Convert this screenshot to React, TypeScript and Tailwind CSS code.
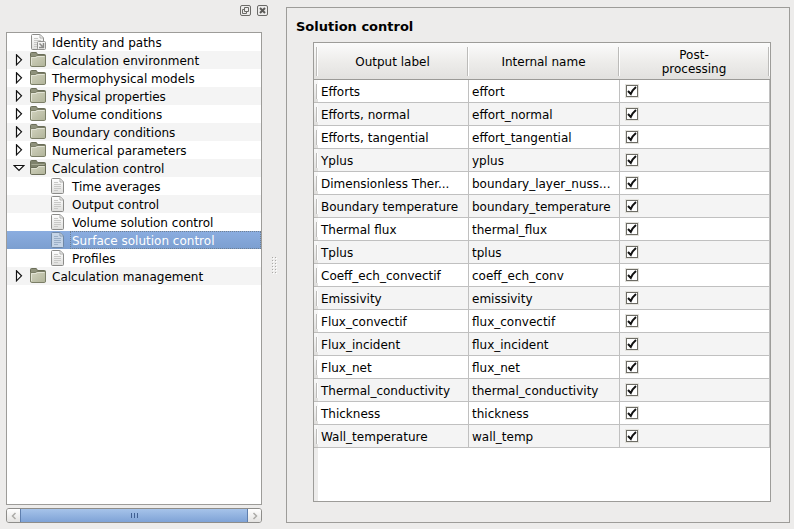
import React from "react";

type TreeItem = {
  label: string;
  kind: "page" | "link" | "folder" | "open";
  child?: boolean;
  selected?: boolean;
};

const treeItems: TreeItem[] = [
  { label: "Identity and paths", kind: "link" },
  { label: "Calculation environment", kind: "folder" },
  { label: "Thermophysical models", kind: "folder" },
  { label: "Physical properties", kind: "folder" },
  { label: "Volume conditions", kind: "folder" },
  { label: "Boundary conditions", kind: "folder" },
  { label: "Numerical parameters", kind: "folder" },
  { label: "Calculation control", kind: "open" },
  { label: "Time averages", kind: "page", child: true },
  { label: "Output control", kind: "page", child: true },
  { label: "Volume solution control", kind: "page", child: true },
  { label: "Surface solution control", kind: "page", child: true, selected: true },
  { label: "Profiles", kind: "page", child: true },
  { label: "Calculation management", kind: "folder" },
];

const rows: [string, string][] = [
  ["Efforts", "effort"],
  ["Efforts, normal", "effort_normal"],
  ["Efforts, tangential", "effort_tangential"],
  ["Yplus", "yplus"],
  ["Dimensionless Ther...", "boundary_layer_nuss..."],
  ["Boundary temperature", "boundary_temperature"],
  ["Thermal flux", "thermal_flux"],
  ["Tplus", "tplus"],
  ["Coeff_ech_convectif", "coeff_ech_conv"],
  ["Emissivity", "emissivity"],
  ["Flux_convectif", "flux_convectif"],
  ["Flux_incident", "flux_incident"],
  ["Flux_net", "flux_net"],
  ["Thermal_conductivity", "thermal_conductivity"],
  ["Thickness", "thickness"],
  ["Wall_temperature", "wall_temp"],
];

function Gradients() {
  return (
    <svg width="0" height="0" className="absolute" aria-hidden="true">
      <defs>
        <linearGradient id="folderFill" x1="0" y1="0" x2="1" y2="1">
          <stop offset="0" stopColor="#d3d4c0" />
          <stop offset="1" stopColor="#b0b399" />
        </linearGradient>
        <linearGradient id="pageFill" x1="0" y1="0" x2="0" y2="1">
          <stop offset="0" stopColor="#ffffff" />
          <stop offset="1" stopColor="#dededc" />
        </linearGradient>
      </defs>
    </svg>
  );
}

function FolderIcon({ open }: { open?: boolean }) {
  return (
    <svg width="16" height="16" viewBox="0 0 16 16" aria-hidden="true" className="shrink-0">
      <path d="M0.5 3V1.500q0-1 1-1h4.500q.7 0 1 1l.4 1H14.500q1 0 1 1V8H.5z" fill={open ? "#7e826c" : "#8f927c"} stroke="#6b6e59" />
      {open ? (
        <>
          <path d="M1.500 4.500h13" stroke="#a5a892" />
          <path d="M.5 7.500h6l2-2h7v7.500q0 1.500-1 1.500H1.500q-1 0-1-1.500z" fill="url(#folderFill)" stroke="#6b6e59" />
          <path d="M1.500 8.500H7l2-2h5.500" stroke="#e0e1d2" fill="none" />
        </>
      ) : (
        <>
          <path d="M.5 4.500h5l1.500-1h8.500v9.500q0 1.500-1 1.500H1.500q-1 0-1-1.500z" fill="url(#folderFill)" stroke="#7b7e67" />
          <path d="M1.500 13V5.500H6l1.500-1h7" stroke="#e2e3d5" fill="none" />
        </>
      )}
    </svg>
  );
}

function PageIcon({ link, selected }: { link?: boolean; selected?: boolean }) {
  return (
    <svg width="16" height="16" viewBox={link ? "-1 0 16 16" : "0 0 16 16"} aria-hidden="true" className="shrink-0">
      <path d="M1.500.5H9L12.500 4v10.500q0 1-1 1h-10q-1 0-1-1v-13q0-1 1-1z" fill={selected ? "#c5d4e6" : "url(#pageFill)"} stroke={selected ? "#7088a6" : "#8b8b89"} />
      <path d="M9 .5V4h3.500z" fill={selected ? "#dce5f0" : "#ffffff"} stroke={selected ? "#8499b2" : "#adadab"} />
      <path d="M3 4.500h4M3 6.500h7M3 8.500h7M3 10.500h7M3 12.500h4" stroke={selected ? "#9bafc7" : "#c8c8c6"} />
      {link && (
        <>
          <rect x="6.500" y="7.500" width="8" height="8" rx="1" fill="#f3f3f2" stroke="#929290" />
          <path d="M8.500 9.500l3 3M12.500 9v4.500h-4.500" stroke="#8a8a88" strokeWidth="1.500" fill="none" />
        </>
      )}
    </svg>
  );
}

function Expander({ open }: { open?: boolean }) {
  return (
    <svg width="12" height="12" viewBox="0 0 12 12" aria-hidden="true" className="shrink-0">
      <path d={open ? "M1 3.500h10L6 8.500z" : "M3.500 .8v10L8.500 5.800z"} fill="#fff" stroke="#111" strokeWidth="1.200" />
    </svg>
  );
}

function TreeRow({ item }: { item: TreeItem }) {
  const isFolder = item.kind === "folder" || item.kind === "open";
  return (
    <li role="treeitem" aria-selected={!!item.selected} className="odd:bg-white even:bg-[#f4f4f4]">
      <button
        type="button"
        className={
          "flex h-[18px] w-full items-center text-left " +
          (item.child ? "pl-[44px] " : "pl-[6px] ") +
          (item.selected ? "bg-linear-to-b from-[#8bade0] to-[#7c9fd0] text-white" : "")
        }
      >
        {!item.child && (
          <span className="mr-[5px] flex w-3">{isFolder && <Expander open={item.kind === "open"} />}</span>
        )}
        <span className={item.child ? "flex w-[19px] shrink-0" : "flex w-5 shrink-0"}>
          {isFolder ? <FolderIcon open={item.kind === "open"} /> : <PageIcon link={item.kind === "link"} selected={item.selected} />}
        </span>
        <span
          className={
            "flex h-full flex-1 items-center whitespace-nowrap border border-dotted pl-px pt-px " +
            (item.selected ? "border-[#6f7f92]" : "border-transparent")
          }
        >
          {item.label}
        </span>
      </button>
    </li>
  );
}

function HeaderCell({ children }: { children?: React.ReactNode }) {
  return (
    <th scope="col" className="border-b border-[#9b9a97] bg-linear-to-b from-[#fbfbfb] from-0% via-[#eeedeb] via-50% to-[#e2e1df] p-0 font-normal">
      <div className="flex h-9 items-center">
        <div className="flex-1 pt-px text-center leading-[14px]">{children}</div>
        <div className="h-[29px] w-[2px] border-l border-[#bcbbb9] bg-white" />
      </div>
    </th>
  );
}

function Tick({ name }: { name: string }) {
  return (
    <label className="grid w-3 grid-cols-1">
      <input
        type="checkbox"
        defaultChecked
        aria-label={"Post-processing: " + name}
        className="peer col-start-1 row-start-1 size-3 appearance-none border border-[#6d6c65] bg-white outline outline-[#e3e2dd]"
      />
      <svg width="12" height="12" viewBox="0 0 12 12" aria-hidden="true" className="pointer-events-none invisible col-start-1 row-start-1 peer-checked:visible">
        <path d="M2 6L4.800 9Q6.300 5 10 2" fill="none" stroke="#111" strokeWidth="2" />
      </svg>
    </label>
  );
}

export default function App() {
  return (
    <div className="flex h-screen bg-[#edeceb] pb-[6px] pl-[6px] pr-1 font-['DejaVu_Sans',sans-serif] text-xs leading-4 text-black">
      <Gradients />
      <aside className="flex w-[262px] shrink-0 flex-col">
        <div className="flex h-8 items-start justify-end gap-[6px] pt-[5px]">
          <button type="button" aria-label="Float" className="flex">
            <svg width="11" height="11" viewBox="0 0 11 11">
              <rect x=".5" y=".5" width="10" height="10" rx="1.500" fill="#edeceb" stroke="#6b6a67" />
              <path d="M4.500 2.500h4v4h-4zM4.500 4.500h-2v4h4v-2" fill="none" stroke="#6b6a67" />
            </svg>
          </button>
          <button type="button" aria-label="Close" className="flex">
            <svg width="11" height="11" viewBox="0 0 11 11">
              <rect x=".5" y=".5" width="10" height="10" rx="1.500" fill="#edeceb" stroke="#6b6a67" />
              <path d="M3 3l5 5M8 3l-5 5" stroke="#5b5a57" strokeWidth="2" />
            </svg>
          </button>
        </div>
        <ul role="tree" className="mr-[6px] flex-1 overflow-hidden border border-[#9d9c99] bg-white">
          {treeItems.map((item) => (
            <TreeRow key={item.label} item={item} />
          ))}
        </ul>
        <div className="mr-[6px] mt-[3px] flex h-[15px] overflow-hidden rounded-[3px] border border-[#8e8d8a] bg-[#f4f4f3]">
          <button type="button" aria-label="Scroll left" className="flex w-[13px] items-center justify-center bg-linear-to-b from-white to-[#e4e3e1]">
            <svg width="6" height="8" viewBox="0 0 6 8"><path d="M4.500 1L1.500 4l3 3" fill="none" stroke="#acaba8" strokeWidth="1.500" /></svg>
          </button>
          <div className="-my-px flex flex-1 items-center justify-center gap-[2px] border border-[#5f7fae] bg-linear-to-b from-[#a6c3ea] to-[#7fa3d6]">
            <span className="h-[5px] w-px bg-[#3f5f92]" />
            <span className="h-[5px] w-px bg-[#3f5f92]" />
            <span className="h-[5px] w-px bg-[#3f5f92]" />
          </div>
          <button type="button" aria-label="Scroll right" className="flex w-[13px] items-center justify-center bg-linear-to-b from-white to-[#e4e3e1]">
            <svg width="6" height="8" viewBox="0 0 6 8"><path d="M1.500 1l3 3-3 3" fill="none" stroke="#acaba8" strokeWidth="1.500" /></svg>
          </button>
        </div>
      </aside>

      <div className="flex w-[18px] shrink-0 items-center pl-1 pt-2">
        <svg width="6" height="18" viewBox="0 0 6 18" aria-hidden="true">
          {[0, 3, 6, 9, 12, 15].map((y) => (
            <g key={y}>
              <path d={`M1 ${y + 1}h1v1h-1zM4 ${y + 1}h1v1h-1z`} fill="#ffffff" />
              <path d={`M0 ${y}h1v1h-1zM3 ${y}h1v1h-1z`} fill="#aaa9a6" />
            </g>
          ))}
        </svg>
      </div>

      <main className="mt-[7px] flex min-w-0 flex-1 flex-col border border-[#9d9c99] pb-5 pl-[26px] pr-[18px]">
        <h1 className="-ml-[17px] flex h-[34px] items-center pt-[3px] text-[13px] font-bold">Solution control</h1>
        <div className="flex flex-1 flex-col overflow-hidden border border-[#9d9c99] bg-white">
          <table className="w-full table-fixed border-separate border-spacing-0">
            <colgroup>
              <col className="w-1" />
              <col className="w-[151px]" />
              <col className="w-[151px]" />
              <col />
            </colgroup>
            <thead>
              <tr>
                <HeaderCell />
                <HeaderCell>Output label</HeaderCell>
                <HeaderCell>Internal name</HeaderCell>
                <HeaderCell>
                  Post-
                  <br />
                  processing
                </HeaderCell>
              </tr>
            </thead>
            <tbody>
              {rows.map(([label, name]) => (
                <tr key={name} className="odd:bg-white even:bg-[#f4f4f4]">
                  <th className="h-[23px] border-b border-[#bdbcba] bg-linear-to-b from-[#fafafa] to-[#dfdedc] p-0">
                    <div className="ml-auto h-[15px] w-[2px] border-l border-[#bcbbb9] bg-white" />
                  </th>
                  <td className="h-[23px] whitespace-nowrap border-b border-r border-[#c0c0c0] p-0 pl-[3px] pt-px">{label}</td>
                  <td className="h-[23px] whitespace-nowrap border-b border-r border-[#c0c0c0] p-0 pl-[3px] pt-px">{name}</td>
                  <td className="h-[23px] border-b border-r border-[#c0c0c0] p-0 pl-[6px]">
                    <Tick name={label} />
                  </td>
                </tr>
              ))}
            </tbody>
          </table>
          <div className="w-1 flex-1 bg-[#edeceb]" />
        </div>
      </main>
    </div>
  );
}
